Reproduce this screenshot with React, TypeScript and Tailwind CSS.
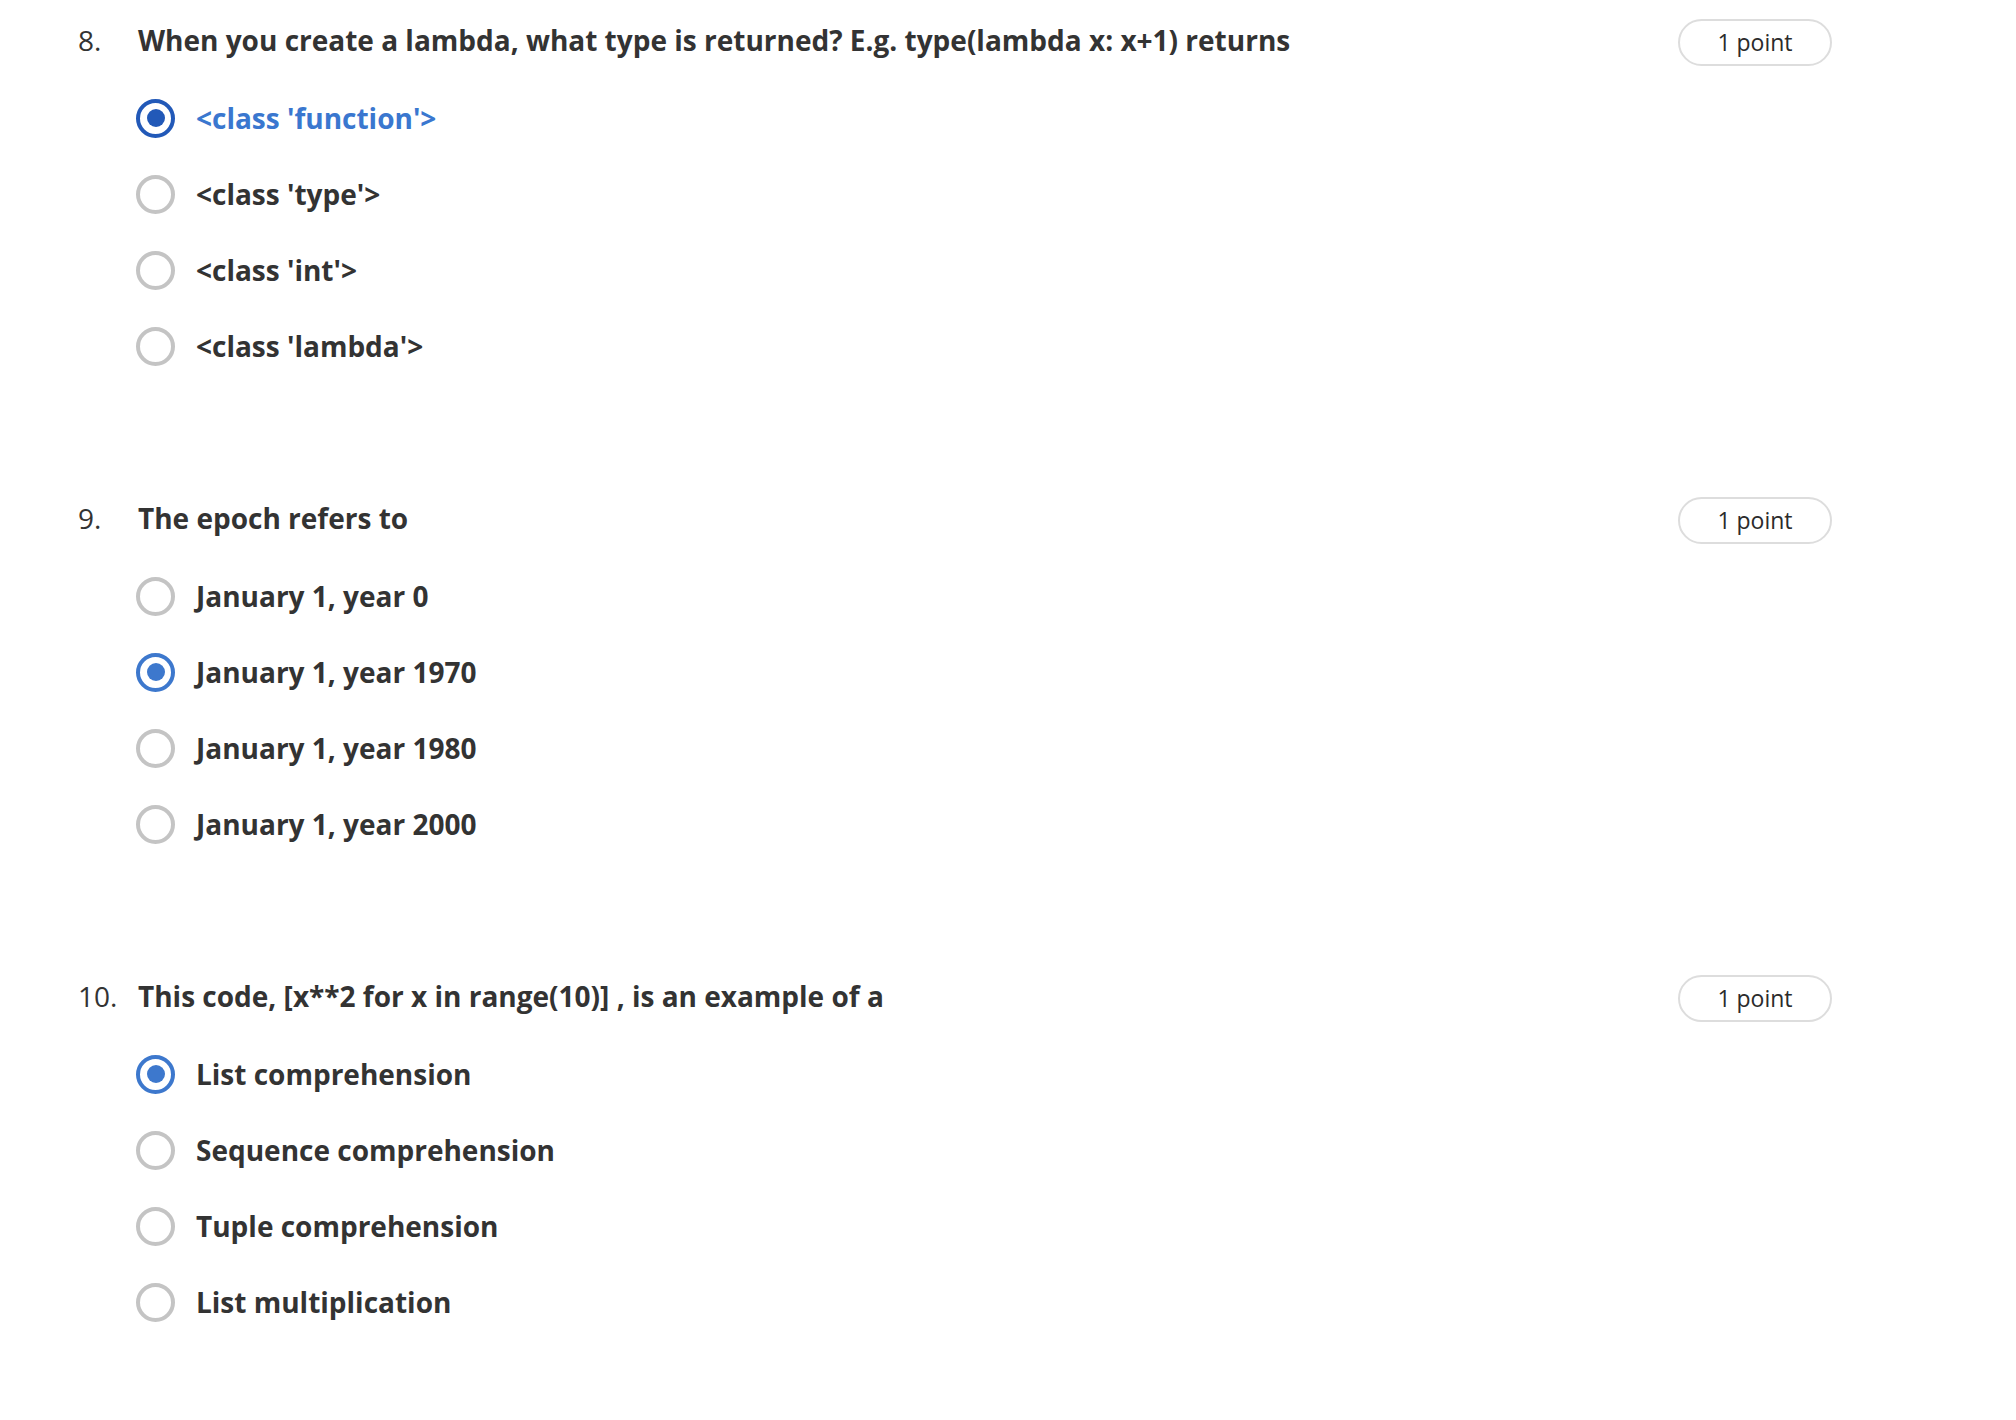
const questions = [
  {
    num: "8.",
    title: "When you create a lambda, what type is returned? E.g. type(lambda x: x+1) returns",
    options: ["<class 'function'>", "<class 'type'>", "<class 'int'>", "<class 'lambda'>"],
    selected: 0,
    focused: true,
  },
  {
    num: "9.",
    title: "The epoch refers to",
    options: ["January 1, year 0", "January 1, year 1970", "January 1, year 1980", "January 1, year 2000"],
    selected: 1,
    focused: false,
  },
  {
    num: "10.",
    title: "This code, [x**2 for x in range(10)] , is an example of a",
    options: ["List comprehension", "Sequence comprehension", "Tuple comprehension", "List multiplication"],
    selected: 0,
    focused: false,
  },
];

const Radio = ({ checked, dark }: { checked: boolean; dark: boolean }) => {
  if (!checked) {
    return <div className="w-[39px] h-[39px] shrink-0 rounded-full border-4 border-[#c4c4c4] bg-white" />;
  }
  return (
    <div
      className={
        dark
          ? "w-[39px] h-[39px] shrink-0 rounded-full border-4 border-[#2259b8] flex items-center justify-center bg-white"
          : "w-[39px] h-[39px] shrink-0 rounded-full border-4 border-[#3d78cd] flex items-center justify-center bg-white"
      }
    >
      <div className={dark ? "w-[18px] h-[18px] rounded-full bg-[#2259b8]" : "w-[18px] h-[18px] rounded-full bg-[#3d78cd]"} />
    </div>
  );
};

export default function App() {
  return (
    <div
      className="min-h-[1420px] bg-white text-[#333333] pl-[78px] pr-[184px] pt-5"
      style={{ fontFamily: "'Open Sans', 'Noto Sans', sans-serif" }}
    >
      {questions.map((q, qi) => (
        <div key={q.num} className={qi > 0 ? "mt-[132px]" : ""}>
          {/* question header */}
          <div className="flex items-center h-10">
            <div className="w-[60px] shrink-0 text-[28px] text-[#333333]">{q.num}</div>
            <h2 className="flex-1 text-[28px] font-bold leading-10 text-[#333333]">{q.title}</h2>
            <div className="mt-[5px] w-[154px] h-[47px] rounded-full border-2 border-[#dddddd] flex items-center justify-center text-[23px] text-[#2b2b2b]">
              1 point
            </div>
          </div>

          {/* options */}
          <div className="pl-[58px] mt-[38px] flex flex-col gap-9">
            {q.options.map((opt, i) => {
              const checked = i === q.selected;
              const blueText = checked && q.focused;
              return (
                <div key={opt} className="flex items-center h-10 gap-[21px]">
                  <Radio checked={checked} dark={q.focused} />
                  <span
                    className={
                      blueText
                        ? "text-[28px] font-bold text-[#3a77cf]"
                        : "text-[28px] font-bold text-[#333333]"
                    }
                  >
                    {opt}
                  </span>
                </div>
              );
            })}
          </div>
        </div>
      ))}
    </div>
  );
}
